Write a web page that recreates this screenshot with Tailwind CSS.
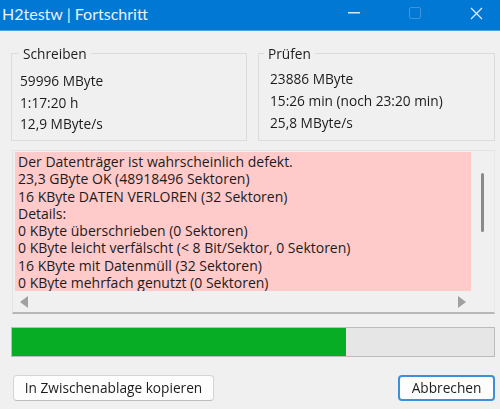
<!DOCTYPE html>
<html lang="de">
<head>
<meta charset="utf-8">
<script src="https://cdn.jsdelivr.net/npm/@tailwindcss/browser@4"></script>
</head>
<body class="w-[500px] h-[409px] overflow-hidden bg-[#f0f0f0] text-[#1c1c1c] font-['Open_Sans',sans-serif]">
<div class="blur-[0.35px]">
<div class="h-[31px] bg-[#0078d4] border-b border-[#4ea3e4] flex items-center justify-between text-[#e8f2fb]">
  <span class="pl-[2px] pb-[2px] text-[16px] font-['Lato',sans-serif]">H2testw | Fortschritt</span>
  <div class="flex items-center gap-[49px] pr-[17px] pb-[4px]">
    <svg width="12" height="2" viewBox="0 0 12 2"><rect width="12" height="1.5" fill="#d5e8f8"/></svg>
    <svg width="12" height="12" viewBox="0 0 12 12"><rect x=".5" y=".5" width="11" height="11" rx="1.5" fill="none" stroke="#3f95dd"/></svg>
    <svg width="13" height="13" viewBox="0 0 13 13"><path d="M1 1 12 12M12 1 1 12" stroke="#e4f0fa" stroke-width="1.2"/></svg>
  </div>
</div>
<div class="pl-[11px] pt-[22px] flex gap-[11px]">
  <div class="relative shrink-0 w-[236px] h-[88px] border border-[#dcdcdc] pl-[8px] pt-[16px] text-[13.7px] leading-[21.5px]">
    <span class="absolute -top-[9px] left-[7px] px-[4px] bg-[#f0f0f0] leading-[18px]">Schreiben</span>
    <p>59996 MByte</p><p>1:17:20 h</p><p>12,9 MByte/s</p>
  </div>
  <div class="relative shrink-0 w-[237px] h-[88px] border border-[#dcdcdc] pl-[11px] pt-[14px] text-[13.7px] leading-[22px]">
    <span class="absolute -top-[9px] left-[5px] px-[4px] bg-[#f0f0f0] leading-[18px]">Prüfen</span>
    <p>23886 MByte</p><p>15:26 min (noch 23:20 min)</p><p>25,8 MByte/s</p>
  </div>
</div>
<div class="ml-[12px] mt-[9px] w-[483px] h-[164px] border-t border-l border-[#e4e4e4] border-r border-r-[#e8e8e8] border-b-2 border-b-[#b8b8b8] flex">
  <div class="w-[458px] flex flex-col">
    <div class="ml-[2px] mt-[1px] h-[139px] bg-[#ffcaca] pl-[3px] pt-[1px] text-[14px] leading-[17.3px] whitespace-nowrap overflow-hidden">
      <p>Der Datenträger ist wahrscheinlich defekt.</p>
      <p>23,3 GByte OK (48918496 Sektoren)</p>
      <p>16 KByte DATEN VERLOREN (32 Sektoren)</p>
      <p>Details:</p>
      <p>0 KByte überschrieben (0 Sektoren)</p>
      <p>0 KByte leicht verfälscht (&lt; 8 Bit/Sektor, 0 Sektoren)</p>
      <p>16 KByte mit Datenmüll (32 Sektoren)</p>
      <p>0 KByte mehrfach genutzt (0 Sektoren)</p>
    </div>
    <div class="flex-1 flex items-center justify-between pl-[7px] pr-[5px]">
      <svg width="8" height="12" viewBox="0 0 8 12"><path d="M8 0V12L0 6Z" fill="#a0a0a0"/></svg>
      <svg width="8" height="12" viewBox="0 0 8 12"><path d="M0 0V12L8 6Z" fill="#a0a0a0"/></svg>
    </div>
  </div>
  <div class="flex-1 flex justify-center pt-[22px]">
    <div class="w-[3px] h-[59px] rounded-full bg-[#8a8a8a]"></div>
  </div>
</div>
<div class="ml-[11px] mt-[13px] w-[484px] h-[30px] border border-[#bcbcbc] bg-[#e6e6e6]">
  <div class="w-[334px] h-full bg-[#06ad25]"></div>
</div>
<div class="mx-[5px] mt-[18px] pl-[8px] flex justify-between">
  <button class="w-[201px] h-[26px] rounded-[4px] bg-[#fdfdfd] border border-[#d4d4d4] border-b-[#bdbdbd] text-[13.7px] leading-none">In Zwischenablage kopieren</button>
  <button class="w-[97px] h-[26px] rounded-[4px] bg-[#fdfdfd] border-2 border-[#3c8fd8] text-[13.7px] leading-none">Abbrechen</button>
</div>
</div>
</body>
</html>
